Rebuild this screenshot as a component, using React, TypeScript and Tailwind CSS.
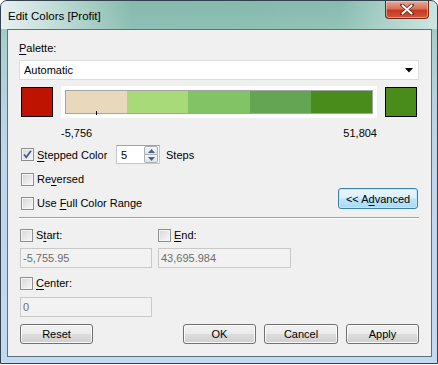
function Check({ checked = false }: { checked?: boolean }) {
  return (
    <span className="w-[13px] h-[13px] shrink-0 border border-[#8f8f8f] bg-[linear-gradient(135deg,#d6d6d6,#f9f9f9)] shadow-[inset_0_0_0_1px_#f4f4f4] flex items-center justify-center">
      {checked && (
        <svg width="11" height="11" viewBox="0 0 11 11">
          <path d="M2 5.5 L4.3 8.3 L9 1.8" fill="none" stroke="#4a5e92" strokeWidth="1.8" />
        </svg>
      )}
    </span>
  );
}

function CheckRow({ checked, children }: { checked?: boolean; children: React.ReactNode }) {
  return (
    <div className="flex items-center h-[14px] gap-[3px] whitespace-nowrap">
      <Check checked={checked} />
      <span>{children}</span>
    </div>
  );
}

function Btn({ children, className = "" }: { children: React.ReactNode; className?: string }) {
  return (
    <div
      className={
        "h-[20px] rounded-[3px] border border-[#707070] bg-[linear-gradient(180deg,#f2f2f2_0%,#ebebeb_48%,#dddddd_52%,#cfcfcf_100%)] shadow-[inset_0_0_0_1px_#fbfbfb] flex items-center justify-center " +
        className
      }
    >
      {children}
    </div>
  );
}

function Field({ value, className = "" }: { value: string; className?: string }) {
  return (
    <div
      className={
        "h-[20px] border border-[#c9c9c9] bg-[#f2f2f2] text-[#6d6d6d] flex items-center pl-[2px] " + className
      }
    >
      {value}
    </div>
  );
}

const segments = ["#e8d9bd", "#a9da7a", "#82c365", "#63a552", "#4a8c1c"];

export default function App() {
  return (
    <div className="w-[438px] h-[365px] bg-white font-['Liberation_Sans',Arial,sans-serif] text-[11px] leading-[14px] text-black">
      <div className="w-[438px] h-[364px] rounded-t-[7px] border border-[#33424d] bg-[linear-gradient(180deg,#8fc0b3_0px,#a9cfca_40px,#bdd6ea_140px,#c2daf1_100%)] flex flex-col overflow-hidden">
        {/* title bar */}
        <div className="h-[28px] flex items-start bg-[linear-gradient(90deg,rgba(236,243,244,0.95)_0%,rgba(200,225,221,0.75)_14%,rgba(120,178,163,0.45)_30%,rgba(110,172,156,0.35)_55%,rgba(120,180,165,0.35)_78%,rgba(214,234,231,0.85)_100%)]">
          <span className="pl-[7px] pt-[8px] text-[11.5px] leading-[14px] whitespace-nowrap">Edit Colors [Profit]</span>
          <div className="ml-auto mr-[8px] w-[44px] h-[18px] rounded-b-[4px] border border-t-0 border-[#6b2a1c] bg-[linear-gradient(180deg,#e9a898_0%,#d9705a_45%,#c6391c_55%,#d2563a_100%)] shadow-[inset_0_0_0_1px_rgba(255,220,210,0.5)] flex items-center justify-center">
            <svg width="14" height="11" viewBox="0 0 14 11">
              <path d="M2 1 L12 10 M12 1 L2 10" fill="none" stroke="#5a2016" strokeWidth="3.6" strokeLinecap="round" />
              <path d="M2.5 1.5 L11.5 9.5 M11.5 1.5 L2.5 9.5" fill="none" stroke="#ffffff" strokeWidth="2.2" strokeLinecap="round" />
            </svg>
          </div>
        </div>

        {/* client area */}
        <div className="ml-[6px] mr-[5px] mb-[6px] flex-1 border border-[#5e707d] bg-[#f0f0f0] pl-[11px] pr-[12px] pt-[11px] flex flex-col whitespace-nowrap">
          <div className="h-[14px]">
            <u className="underline-offset-[2px]">P</u>alette:
          </div>

          <div className="mt-[5px] h-[20px] w-[400px] border border-[#dcdcdc] bg-white flex items-center pl-[4px] pr-[5px]">
            <span>Automatic</span>
            <svg className="ml-auto" width="8" height="5" viewBox="0 0 8 5">
              <path d="M0 0 H8 L4 4.5 Z" fill="#000" />
            </svg>
          </div>

          <div className="mt-[6px] h-[32px] flex items-center">
            <div className="ml-[2px] w-[32px] h-[30px] border border-black bg-[#bd1300]" />
            <div className="ml-[8px] w-[316px] h-[32px] bg-white p-[4px]">
              <div className="relative h-[24px] border border-[#a3a3a3] flex">
                {segments.map((c) => (
                  <div key={c} className="flex-1 h-full" style={{ backgroundColor: c }} />
                ))}
                <div className="absolute left-[30px] bottom-[-2px] w-px h-[4px] bg-black" />
              </div>
            </div>
            <div className="ml-[8px] w-[32px] h-[30px] border border-black bg-[#4a8c1c]" />
          </div>

          <div className="mt-[8px] ml-[42px] w-[316px] flex justify-between">
            <span>-5,756</span>
            <span>51,804</span>
          </div>

          <div className="mt-[5px] h-[19px] flex items-center">
            <div className="ml-[2px] w-[95px]">
              <CheckRow checked>
                <u className="underline-offset-[2px]">S</u>tepped Color
              </CheckRow>
            </div>
            <div className="w-[44px] h-[19px] border border-[#c3c7cc] border-t-[#9ea3a8] bg-white flex items-center">
              <span className="pl-[4px] flex-1">5</span>
              <div className="w-[14px] h-[17px] flex flex-col mr-px">
                <div className="flex-1 rounded-t-[2px] border border-[#a9b0b8] bg-[linear-gradient(180deg,#f5f6f7,#dfe3e8)] flex items-center justify-center">
                  <svg width="7" height="4" viewBox="0 0 7 4">
                    <path d="M0 4 L3.5 0 L7 4 Z" fill="#4d6185" />
                  </svg>
                </div>
                <div className="flex-1 rounded-b-[2px] border border-t-0 border-[#a9b0b8] bg-[linear-gradient(180deg,#f5f6f7,#dfe3e8)] flex items-center justify-center">
                  <svg width="7" height="4" viewBox="0 0 7 4">
                    <path d="M0 0 L7 0 L3.5 4 Z" fill="#4d6185" />
                  </svg>
                </div>
              </div>
            </div>
            <span className="ml-[6px]">Steps</span>
          </div>

          <div className="mt-[8px] ml-[2px]">
            <CheckRow>
              Re<u className="underline-offset-[2px]">v</u>ersed
            </CheckRow>
          </div>

          <div className="mt-[2px] h-[22px] flex justify-between">
            <div className="ml-[2px] self-end">
              <CheckRow>
                Use <u className="underline-offset-[2px]">F</u>ull Color Range
              </CheckRow>
            </div>
            <div className="mr-px w-[80px] h-[21px] rounded-[3px] border border-[#3c7fb1] bg-[linear-gradient(180deg,#eaf6fd_0%,#d9f0fc_48%,#bee6fd_52%,#a7d9f5_100%)] shadow-[inset_0_0_0_1px_#c0eaff] flex items-center justify-center">
              &lt;&lt; A<u className="underline-offset-[2px]">d</u>vanced
            </div>
          </div>

          <div className="mt-[7px] h-px w-[400px] bg-[#a0a0a0]" />
          <div className="h-px w-[400px] bg-white" />

          <div className="mt-[9px] ml-px flex">
            <div className="w-[138px]">
              <CheckRow>
                S<u className="underline-offset-[2px]">t</u>art:
              </CheckRow>
            </div>
            <CheckRow>
              <u className="underline-offset-[2px]">E</u>nd:
            </CheckRow>
          </div>

          <div className="mt-[6px] ml-px flex gap-[6px]">
            <Field value="-5,755.95" className="w-[132px]" />
            <Field value="43,695.984" className="w-[133px]" />
          </div>

          <div className="mt-[8px] ml-px">
            <CheckRow>
              <u className="underline-offset-[2px]">C</u>enter:
            </CheckRow>
          </div>

          <Field value="0" className="mt-[7px] ml-px w-[132px]" />

          <div className="mt-[7px] ml-px flex">
            <Btn className="w-[73px]">Reset</Btn>
            <div className="ml-auto flex gap-[8px]">
              <Btn className="w-[73px]">OK</Btn>
              <Btn className="w-[74px]">Cancel</Btn>
              <Btn className="w-[73px]">Apply</Btn>
            </div>
          </div>
        </div>
      </div>
    </div>
  );
}
